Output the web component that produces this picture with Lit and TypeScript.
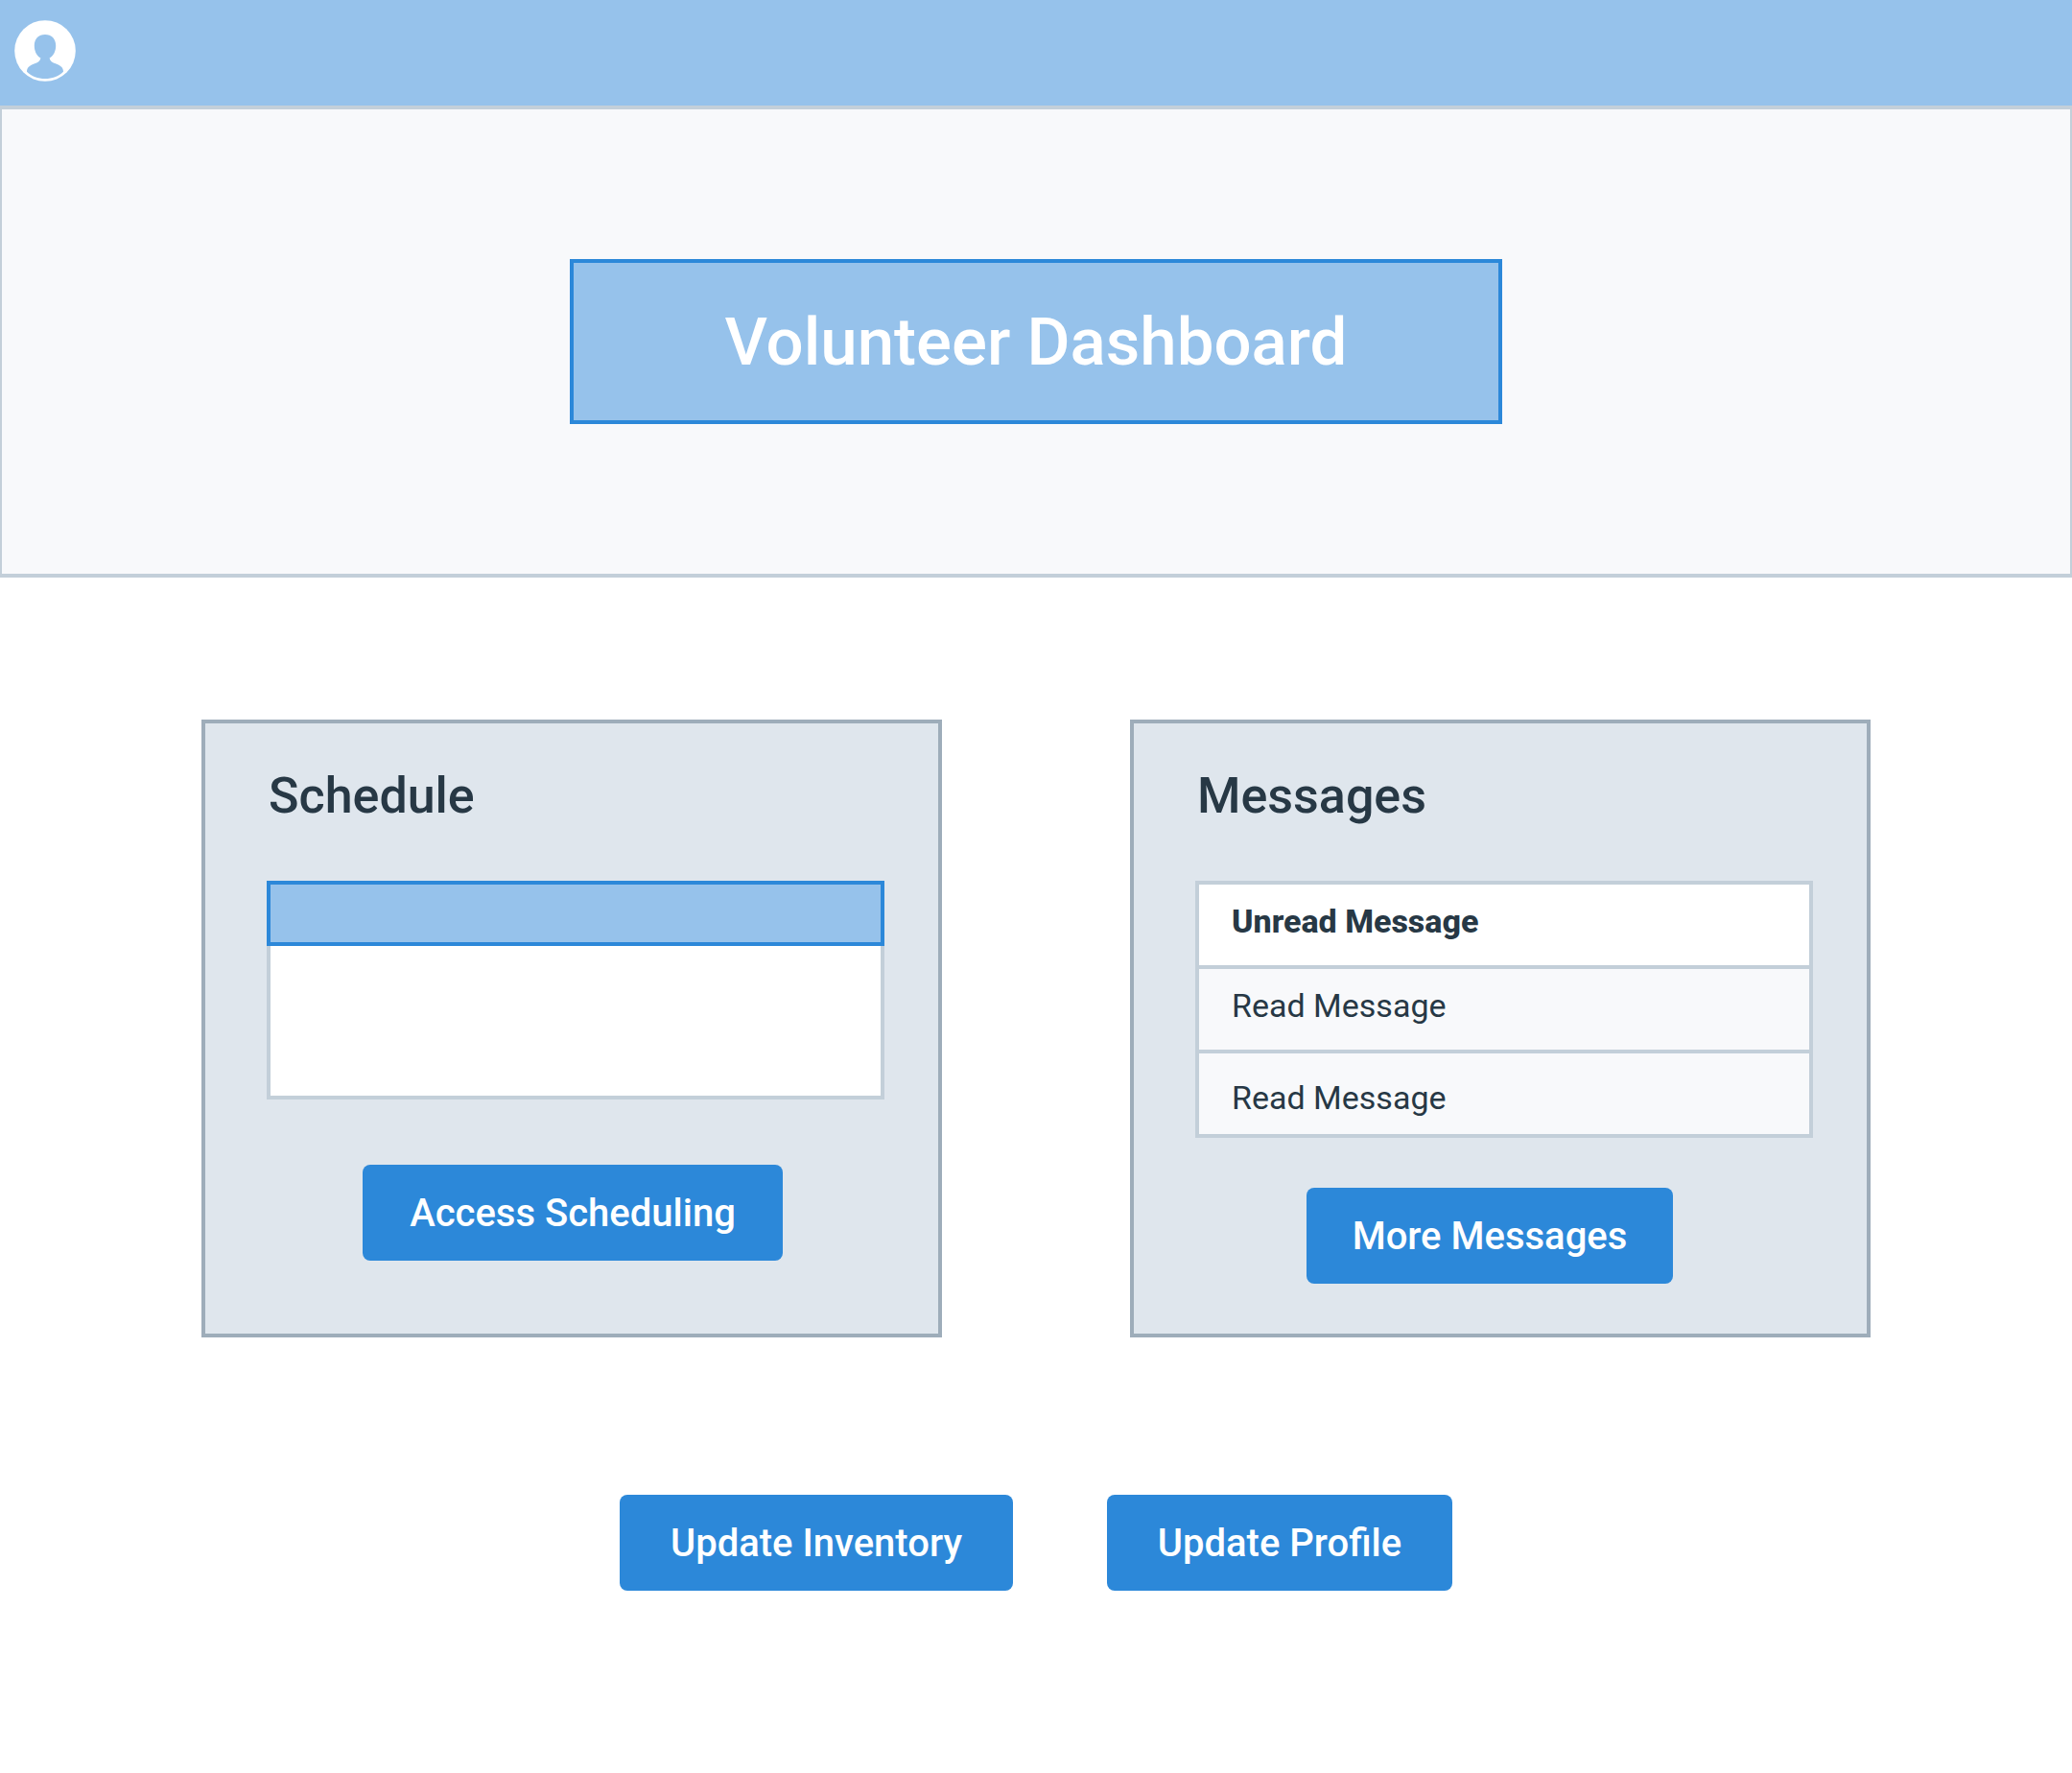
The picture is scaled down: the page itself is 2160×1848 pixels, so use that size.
import { LitElement, html, css } from "lit";
import { customElement } from "lit/decorators.js";

interface Message {
  subject: string;
  unread: boolean;
}

@customElement("app-root")
export class AppRoot extends LitElement {
  static styles = css`
    :host {
      --sky: #96c2eb;
      --blue: #2c88d9;
      --ink: #273845;
      --line: #c3cfd9;
      --line-dark: #9eadba;
      --panel: #dfe6ed;
      --mist: #f8f9fb;
      display: block;
      min-height: 100vh;
      background: #ffffff;
      color: var(--ink);
      font-family: Roboto, "Liberation Sans", sans-serif;
    }
    * {
      box-sizing: border-box;
    }
    h1, h2, ul {
      margin: 0;
      padding: 0;
    }
    button {
      border: 0;
      padding: 0;
      font: inherit;
      color: inherit;
      cursor: pointer;
    }
    .topbar {
      display: flex;
      align-items: center;
      height: 110px;
      padding: 0 15px 4px;
      background: var(--sky);
    }
    .avatar {
      width: 64px;
      height: 64px;
      border-radius: 50%;
      background: none;
    }
    .avatar svg {
      display: block;
      width: 100%;
      height: 100%;
    }
    .hero {
      display: flex;
      justify-content: center;
      padding: 156px 0;
      background: var(--mist);
      border: solid var(--line);
      border-width: 4px 2px;
    }
    .title {
      width: 45vw;
      padding: 39px 0 37px;
      border: 4px solid var(--blue);
      background: var(--sky);
      color: #ffffff;
      font-size: 69px;
      line-height: 88px;
      font-weight: 500;
      text-align: center;
    }
    .cards {
      display: grid;
      grid-template-columns: 1fr 1fr;
      gap: 196px;
      padding: 148px 210px 164px;
    }
    .card {
      display: flex;
      flex-direction: column;
      min-height: 644px;
      padding: 44px 56px 52px 64px;
      border: 4px solid var(--line-dark);
      background: var(--panel);
    }
    .heading {
      margin-bottom: 56px;
      padding-left: 2px;
      font-size: 52px;
      line-height: 64px;
      font-weight: 500;
    }
    .agenda {
      height: 228px;
      border: 4px solid var(--line);
      background: #ffffff;
    }
    .slot {
      height: 68px;
      margin: -4px;
      border: 4px solid var(--blue);
      background: var(--sky);
    }
    .messages {
      border: 4px solid var(--line);
      list-style: none;
    }
    .message {
      padding: 18px 34px 26px;
      background: var(--mist);
      font-size: 34px;
      line-height: 40px;
    }
    .message + .message {
      border-top: 4px solid var(--line);
    }
    .message:last-child {
      padding: 26px 34px 18px;
    }
    .unread {
      background: #ffffff;
      font-weight: 800;
    }
    .action {
      display: flex;
      justify-content: center;
    }
    .for-schedule {
      padding: 68px 6px 0 0;
    }
    .for-messages {
      padding: 52px 30px 0 0;
    }
    .button {
      height: 100px;
      padding-top: 2px;
      border-radius: 8px;
      background: var(--blue);
      color: #ffffff;
      font-size: 40px;
      font-weight: 500;
      line-height: 48px;
    }
    .scheduling { width: 438px; }
    .more { width: 382px; }
    .inventory { width: 410px; }
    .profile { width: 360px; }
    .shortcuts {
      display: flex;
      justify-content: center;
      gap: 98px;
    }
  `;

  private messages: Message[] = [
    { subject: "Unread Message", unread: true },
    { subject: "Read Message", unread: false },
    { subject: "Read Message", unread: false },
  ];

  render() {
    return html`
      <header class="topbar">
        <button class="avatar" aria-label="Account">
          <svg viewBox="0 0 64 64" aria-hidden="true">
            <circle cx="32" cy="32" r="31.8" fill="#fff" />
            <path
              fill="#96c2eb"
              d="M27.4 39.5C23 37 20.8 32 20.8 26.5C20.8 19.4 25.3 15 32 15S43.2 19.4 43.2 26.5C43.2 32 41 37 36.6 39.5C37 42.5 39.5 44.2 43.5 45.6C48.5 47.6 51 49.8 51 53.7C46 58.6 39.5 61 32 61S18 58.6 13 53.7C13 49.8 15.5 47.6 20.5 45.6C24.5 44.2 27 42.5 27.4 39.5Z"
            />
          </svg>
        </button>
      </header>
      <main>
        <div class="hero"><h1 class="title">Volunteer Dashboard</h1></div>
        <div class="cards">
          <section class="card">
            <h2 class="heading">Schedule</h2>
            <div class="agenda"><div class="slot"></div></div>
            <div class="action for-schedule">
              <button class="button scheduling">Access Scheduling</button>
            </div>
          </section>
          <section class="card">
            <h2 class="heading">Messages</h2>
            <ul class="messages">
              ${this.messages.map(
                (m) => html`<li class="message ${m.unread ? "unread" : ""}">${m.subject}</li>`
              )}
            </ul>
            <div class="action for-messages">
              <button class="button more">More Messages</button>
            </div>
          </section>
        </div>
        <nav class="shortcuts" aria-label="Shortcuts">
          <button class="button inventory">Update Inventory</button>
          <button class="button profile">Update Profile</button>
        </nav>
      </main>
    `;
  }
}
